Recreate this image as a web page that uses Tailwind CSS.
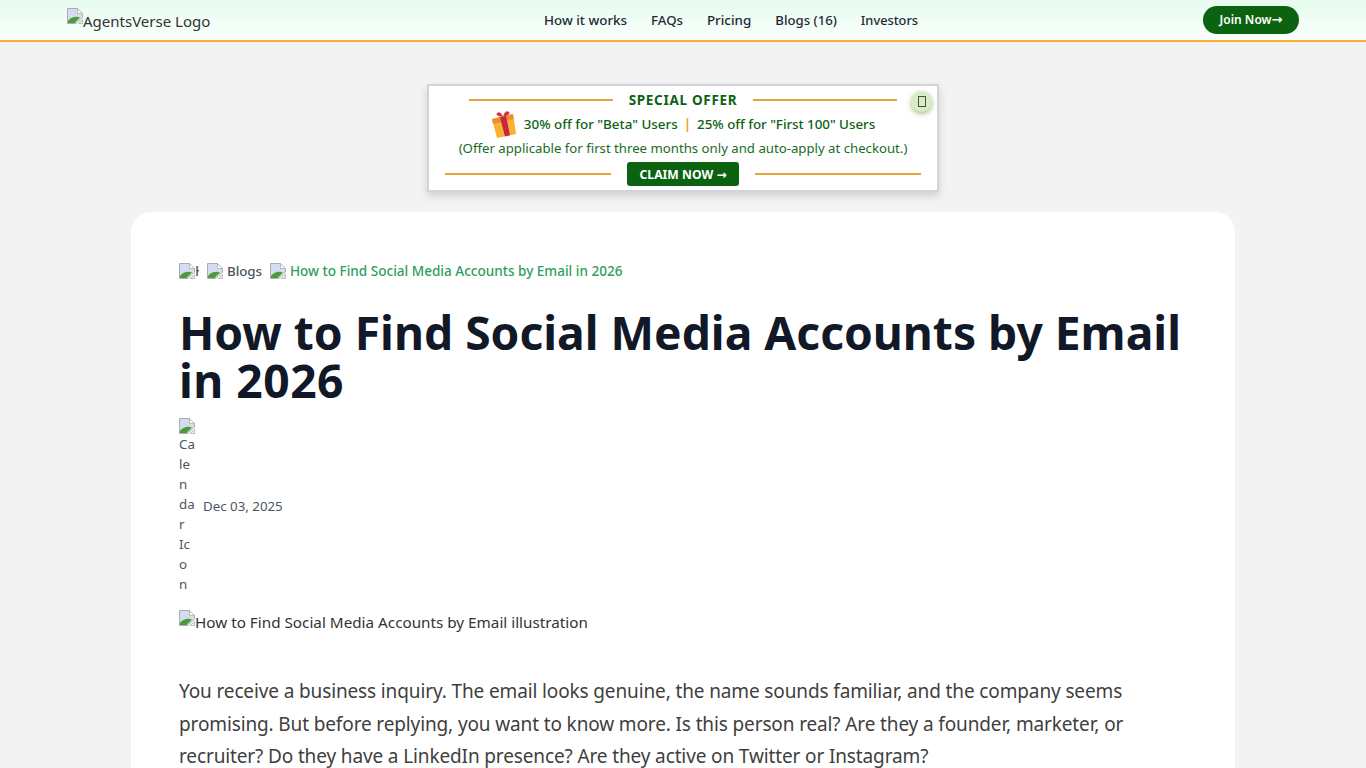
<!DOCTYPE html>
<html>
<head>
<meta charset="utf-8">
<script src="https://cdn.jsdelivr.net/npm/@tailwindcss/browser@4"></script>
<title>How to Find Social Media Accounts by Email in 2026</title>
</head>
<body class="bg-[#f3f3f3] font-['Noto_Sans','Open_Sans',sans-serif] overflow-hidden h-[768px]">
<svg width="0" height="0" class="absolute">
  <symbol id="broken" viewBox="0 0 16 16">
    <path d="M.5 .5H10.5L15.5 5.5V9L9 15.5H.5Z" fill="#d3ddef" stroke="#adadad"/>
    <path d="M10.5 .5V5.5H15.5Z" fill="#fff" stroke="#adadad" stroke-width=".8"/>
    <path d="M1 15V13C4 9 9 8 13 9.5L7.5 15Z" fill="#4c9a3a"/>
    <path d="M11.5 15.5 15.5 11.5V15.5Z" fill="#eef2e8" stroke="#adadad" stroke-width=".8"/>
  </symbol>
</svg>

<header class="h-[42px] border-b-2 border-[#f5b32f] bg-gradient-to-b from-[#e6fcee] to-[#fbfffc] flex items-center justify-between pl-[67px] pr-[67px]">
  <div class="w-[300px] h-[40px] relative text-[15px] text-[#333] flex items-center">
    <svg class="w-4 h-4 absolute left-0 top-[8px]"><use href="#broken"/></svg>
    <span class="pl-4 pt-[1px] leading-6">AgentsVerse Logo</span>
  </div>
  <nav class="flex gap-6 font-medium text-[#1f2937] absolute left-[544px] top-[10px] leading-5">
    <a class="text-[13.4px]">How it works</a><a class="text-[13.2px]">FAQs</a><a class="text-[13.4px]">Pricing</a><a class="text-[13.2px]">Blogs (16)</a><a class="text-[12.8px]">Investors</a>
  </nav>
  <a class="h-[28px] w-[96px] rounded-full bg-[#0b6312] text-white text-[12px] font-semibold flex items-center justify-center">Join Now<span class="font-['DejaVu_Sans',sans-serif] text-[13px]">→</span></a>
</header>

<main class="flex flex-col items-center">
  <section class="relative mt-[42px] w-[512px] h-[108px] bg-white border-2 border-[#d1d5db] shadow-[0_4px_8px_rgba(0,0,0,0.15)] flex flex-col items-center text-[#0b6312]">
    <div class="flex items-center gap-[15px] h-[26px] pt-[2px] w-full justify-center">
      <span class="w-[144px] h-[2px] bg-[#e6a23c]"></span>
      <span class="text-[13.5px] font-bold tracking-[0.7px] w-[110px] text-center whitespace-nowrap">SPECIAL OFFER</span>
      <span class="w-[144px] h-[2px] bg-[#e6a23c]"></span>
    </div>
    <div class="flex items-center h-[24px] text-[13.4px] font-medium">
      <svg class="w-[26px] h-[28px] mr-[7px] mt-[2px]" viewBox="0 0 26 28">
        <path d="M1 8 22 3 25 23 6 27Z" fill="#f9b233"/>
        <path d="M1 8 22 3 22.7 8 2 13Z" fill="#ee8f2b"/>
        <path d="M9 6.5 15 5 19 24.3 14 25.5Z" fill="#c8283f"/>
        <path d="M12 6C8 6 4 4 6 2 9 0 11 3 12 6 13 2 15-1 18 1 20 3 16 5 12 6Z" fill="#d92f43"/>
      </svg>
      <span>30% off for "Beta" Users</span>
      <span class="mx-[6px] text-[#f0a030] font-bold">|</span>
      <span class="tracking-[-0.04px]">25% off for "First 100" Users</span>
    </div>
    <p class="text-[13.2px] h-[24px] leading-[24px] text-[#1a6b24]">(Offer applicable for first three months only and auto-apply at checkout.)</p>
    <div class="flex items-center gap-[16px] h-[26px] pt-[2px] w-full justify-center">
      <span class="w-[166px] h-[2px] bg-[#e6a23c]"></span>
      <a class="w-[112px] h-[24px] pt-[2px] rounded-[3px] bg-[#0b6312] text-white text-[12.2px] font-bold flex items-center justify-center whitespace-pre">CLAIM NOW <span class="font-['DejaVu_Sans',sans-serif] text-[12px]">→</span></a>
      <span class="w-[166px] h-[2px] bg-[#e6a23c]"></span>
    </div>
    <button class="absolute right-[5px] top-[5px] w-[21px] h-[21px] rounded-full bg-[#d5edc9] shadow-[0_2px_5px_rgba(130,120,40,0.55)] flex items-center justify-center">
      <span class="block w-[8px] h-[11px] border border-[#5a4a3a]"></span>
    </button>
  </section>

  <article class="mt-[20px] w-[1104px] h-[600px] bg-white rounded-[20px] px-[48px] pt-[48px]">
    <nav class="flex items-center gap-2 h-[22px] text-[13.5px] font-medium text-[#4b5563]">
      <span class="w-5 h-5 flex items-center overflow-hidden relative shrink-0"><svg class="w-4 h-4 shrink-0"><use href="#broken"/></svg><span>H</span></span>
      <span class="flex items-center gap-1 text-[13.4px] tracking-[-0.08px]"><svg class="w-4 h-4"><use href="#broken"/></svg>Blogs</span>
      <span class="flex items-center gap-1 text-[#2f9e5e] text-[13.55px] pt-[1px]"><svg class="w-4 h-4 -mt-[1px]"><use href="#broken"/></svg>How to Find Social Media Accounts by Email in 2026</span>
    </nav>
    <h1 class="mt-[27px] text-[46.2px] leading-[48px] font-bold text-[#111827]">How to Find Social Media Accounts by Email <span class="tracking-[0.5px]">in 2026</span></h1>
    <div class="flex items-center gap-2 mt-[13px] text-[13.3px] text-[#4b5563]">
      <div class="w-4 leading-5 text-[#4b5563]">
        <svg class="w-4 h-4 block"><use href="#broken"/></svg>
        Ca<br>le<br>n<br>da<br>r<br>Ic<br>o<br>n
      </div>
      <span class="pt-[1px]">Dec 03, 2025</span>
    </div>
    <div class="relative mt-[16px] h-[24px] text-[15.25px] leading-6 text-[#333]">
      <svg class="w-4 h-4 absolute left-0 top-0"><use href="#broken"/></svg>
      <span class="pl-4">How to Find Social Media Accounts by Email illustration</span>
    </div>
    <p class="mt-[41px] text-[19px] tracking-[-0.13px] leading-[32.5px] text-[#404040]">You receive a business inquiry. The email looks genuine, the name sounds familiar, and the company seems promising. But before replying, you want to know more. Is this person real? Are they a founder, marketer, or recruiter? Do they have a LinkedIn presence? Are they active on Twitter or Instagram?</p>
  </article>
</main>
</body>
</html>
